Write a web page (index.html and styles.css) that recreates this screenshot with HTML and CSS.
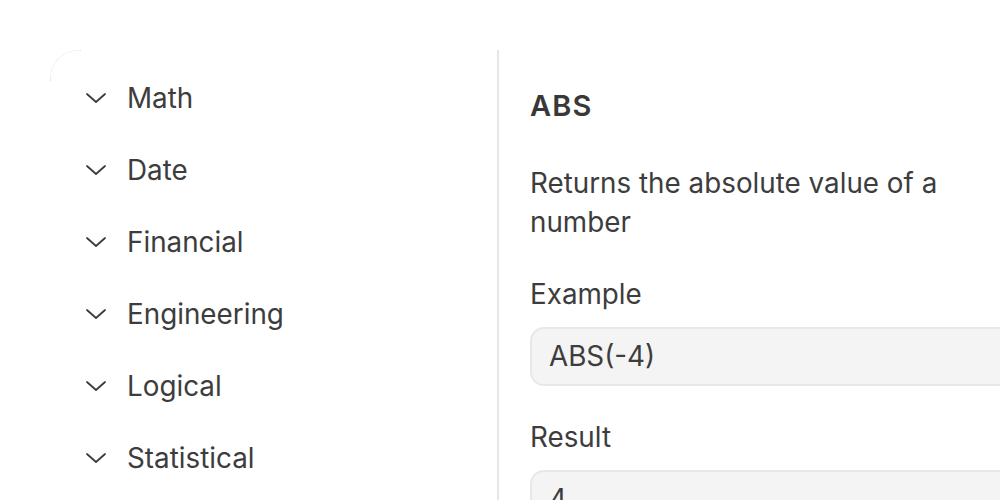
FILE: index.html
```html
<!DOCTYPE html>
<html lang="en">
<head>
    <meta charset="UTF-8">
    <title>Functions</title>
    <link rel="stylesheet" href="styles.css">
</head>
<body>
    <main class="layout">
        <nav class="categories">
            <div class="category">
                <svg class="chevron" viewBox="0 0 20 10"><polyline points="1,1 10,9 19,1"/></svg>
                <span>Math</span>
            </div>
            <div class="category">
                <svg class="chevron" viewBox="0 0 20 10"><polyline points="1,1 10,9 19,1"/></svg>
                <span>Date</span>
            </div>
            <div class="category">
                <svg class="chevron" viewBox="0 0 20 10"><polyline points="1,1 10,9 19,1"/></svg>
                <span>Financial</span>
            </div>
            <div class="category">
                <svg class="chevron" viewBox="0 0 20 10"><polyline points="1,1 10,9 19,1"/></svg>
                <span>Engineering</span>
            </div>
            <div class="category">
                <svg class="chevron" viewBox="0 0 20 10"><polyline points="1,1 10,9 19,1"/></svg>
                <span>Logical</span>
            </div>
            <div class="category">
                <svg class="chevron" viewBox="0 0 20 10"><polyline points="1,1 10,9 19,1"/></svg>
                <span>Statistical</span>
            </div>
        </nav>

        <section class="details">
            <h2>ABS</h2>
            <p>Returns the absolute value of a number</p>
            <div class="label">Example</div>
            <div class="field">ABS(-4)</div>
            <div class="label">Result</div>
            <div class="field">4</div>
        </section>
    </main>
</body>
</html>
```

FILE: styles.css
```css
:root {
    --text: #3d3d3d;
    --line: #e6e6e6;
}
html, body {
    margin: 0;
    padding: 0;
    width: 100%;
    height: 100%;
    overflow: hidden;
    background: #fff;
    font-family: Inter, "Noto Sans", sans-serif;
    color: var(--text);
}
.layout {
    display: grid;
    grid-template-columns: 449px 520px;
    padding: 50px 0 0 50px;
}
.categories {
    position: relative;
    padding: 26px 0 0 36px;
    border-right: 2px solid var(--line);
}
.categories::before {
    content: "";
    position: absolute;
    top: 0;
    left: 0;
    width: 30px;
    height: 30px;
    border-top: 1px dotted #e2e2e2;
    border-left: 1px dotted #e2e2e2;
    border-top-left-radius: 28px;
}
.category {
    display: flex;
    align-items: center;
    gap: 21px;
    height: 72px;
    font-size: 27.8px;
}
.category:first-child {
    margin-top: -14px;
}
.chevron {
    width: 20px;
    height: 10px;
    fill: none;
    stroke: var(--text);
    stroke-width: 1.8;
    stroke-linecap: round;
    stroke-linejoin: round;
}
.details {
    padding: 36px 0 0 31px;
    font-size: 27.8px;
    line-height: 39px;
}
.details h2 {
    margin: 0;
    font-size: 29px;
    font-weight: 600;
    letter-spacing: 1.2px;
    line-height: 40px;
    color: #383838;
}
.details p {
    margin: 38px 0 0;
    max-width: 440px;
}
.label {
    margin-top: 33px;
}
.field + .label {
    margin-top: 32px;
}
.field {
    margin-top: 13px;
    height: 55px;
    padding: 0 17px;
    display: flex;
    align-items: center;
    background: #f4f4f4;
    border: 2px solid #e8e8e8;
    border-radius: 14px;
}
```
